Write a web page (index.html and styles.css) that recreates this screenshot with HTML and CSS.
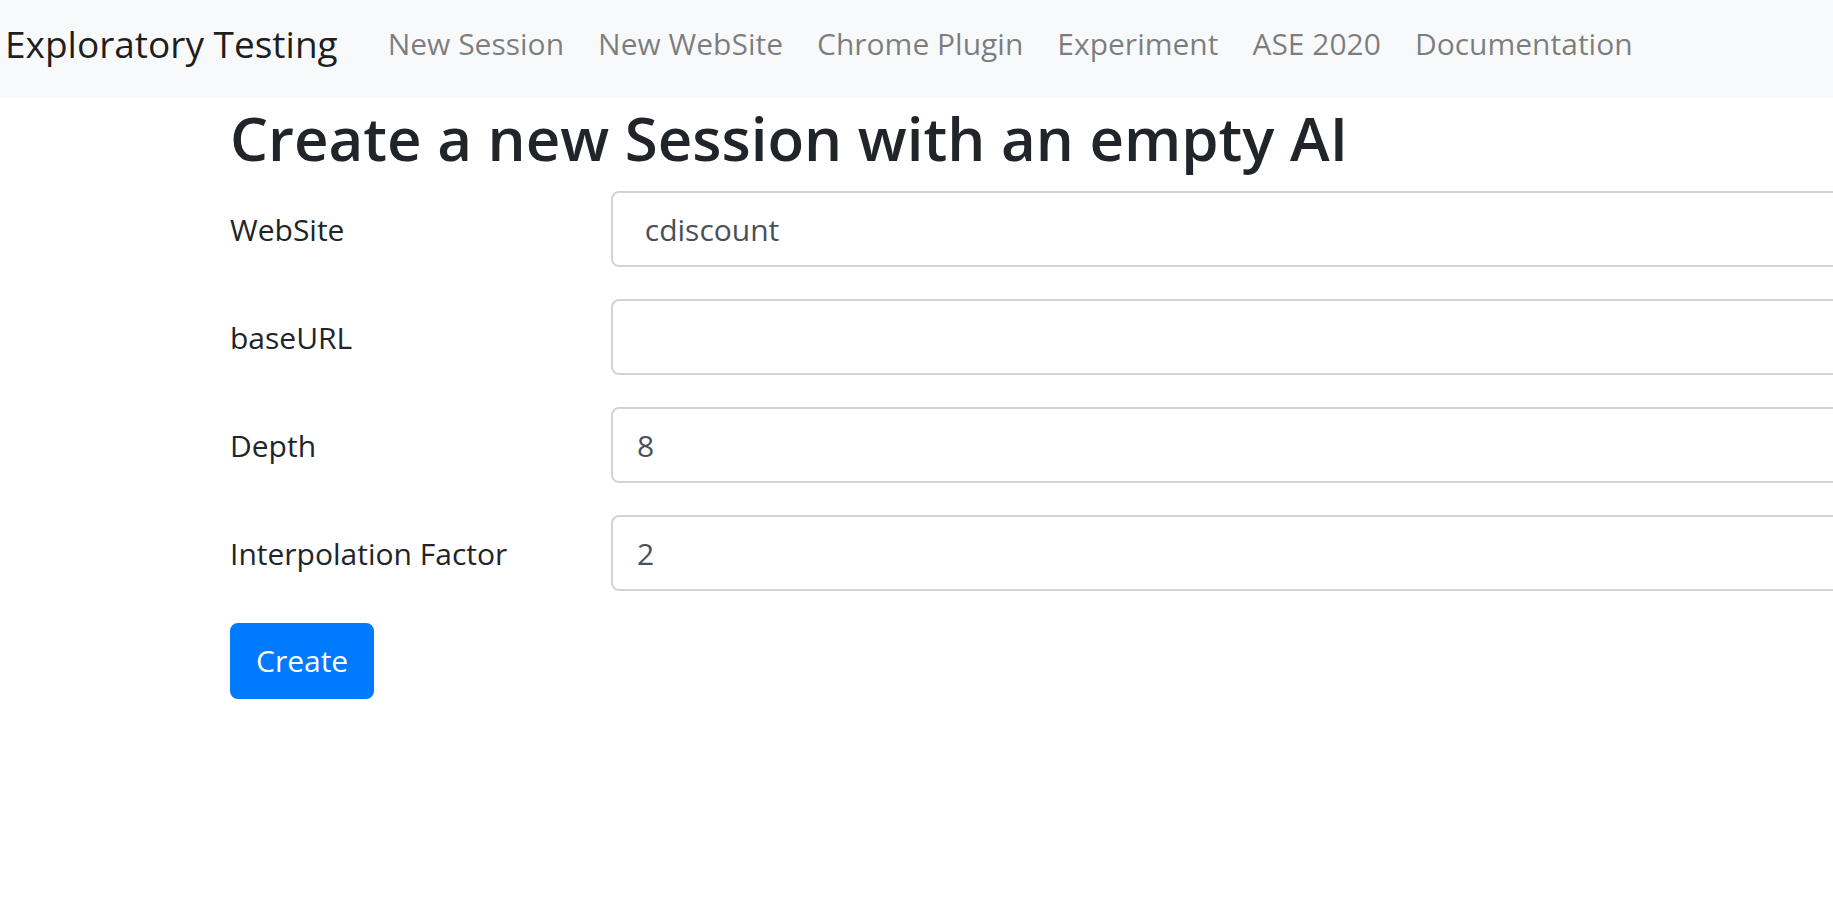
FILE: index.html
```html
<!DOCTYPE html>
<html lang="en">
<head>
<meta charset="utf-8">
<title>Exploratory Testing</title>
<link rel="stylesheet" href="styles.css">
</head>
<body>
<nav class="navbar">
  <a class="brand" href="#">Exploratory Testing</a>
  <ul class="nav">
    <li><a class="nav-link" href="#">New Session</a></li>
    <li><a class="nav-link" href="#">New WebSite</a></li>
    <li><a class="nav-link" href="#">Chrome Plugin</a></li>
    <li><a class="nav-link" href="#">Experiment</a></li>
    <li><a class="nav-link" href="#">ASE 2020</a></li>
    <li><a class="nav-link" href="#">Documentation</a></li>
  </ul>
</nav>
<main class="main">
  <h1 class="title">Create a new Session with an empty AI</h1>
  <form class="form">
    <div class="form-row">
      <label class="form-label" for="website">WebSite</label>
      <input class="form-control" id="website" type="text" value=" cdiscount">
    </div>
    <div class="form-row">
      <label class="form-label" for="baseurl">baseURL</label>
      <input class="form-control" id="baseurl" type="text" value="">
    </div>
    <div class="form-row">
      <label class="form-label" for="depth">Depth</label>
      <input class="form-control" id="depth" type="text" value="8">
    </div>
    <div class="form-row">
      <label class="form-label" for="factor">Interpolation Factor</label>
      <input class="form-control" id="factor" type="text" value="2">
    </div>
    <button class="btn" type="button">Create</button>
  </form>
</main>
</body>
</html>
```
FILE: styles.css
```css
html, body {
  margin: 0;
  padding: 0;
  overflow: hidden;
  background: #fff;
}
body {
  font-family: "Segoe UI", "Open Sans", "Liberation Sans", sans-serif;
  font-size: 30px;
  line-height: 1.5;
  color: #212529;
}
.navbar {
  box-sizing: border-box;
  height: 98px;
  padding: 0 0 10px 5px;
  background: #f8f9fa;
  display: flex;
  align-items: center;
}
.brand {
  font-size: 37px;
  line-height: 1.5;
  color: rgba(0, 0, 0, 0.9);
  text-decoration: none;
  margin-right: 33px;
  white-space: nowrap;
}
.nav {
  list-style: none;
  margin: 0;
  padding: 0;
  display: flex;
}
.nav-link {
  display: block;
  padding: 0 17px;
  font-size: 30px;
  line-height: 48px;
  color: rgba(0, 0, 0, 0.5);
  text-decoration: none;
  white-space: nowrap;
}
.main {
  padding-left: 230px;
}
.title {
  margin: 2px 0 14px 0;
  font-size: 60px;
  font-weight: 600;
  line-height: 77px;
  color: #212529;
  white-space: nowrap;
}
.form-row {
  display: flex;
  align-items: center;
  margin-bottom: 32px;
}
.form-label {
  flex: none;
  width: 381px;
  font-size: 30px;
}
.form-control {
  flex: none;
  box-sizing: border-box;
  width: 1400px;
  height: 76px;
  padding: 12px 24px;
  font-family: inherit;
  font-size: 30px;
  line-height: 48px;
  color: #495057;
  background: #fff;
  border: 2px solid #ced4da;
  border-radius: 8px;
  outline: none;
}
.btn {
  box-sizing: border-box;
  height: 76px;
  padding: 12px 24px;
  font-family: inherit;
  font-size: 30px;
  line-height: 48px;
  color: #fff;
  background: #007bff;
  border: 2px solid #007bff;
  border-radius: 8px;
  cursor: pointer;
}
```
